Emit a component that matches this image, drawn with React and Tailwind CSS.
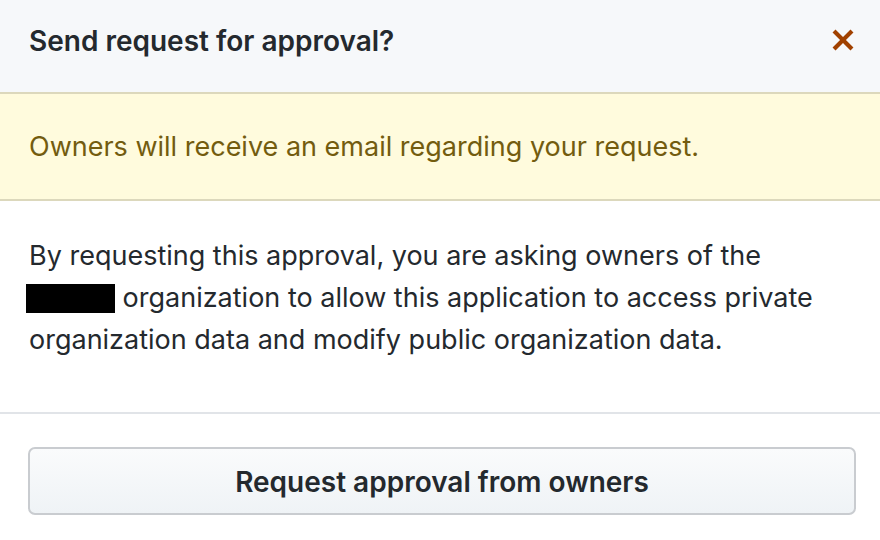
export default function App() {
  return (
    <div className="w-[880px] h-[540px] bg-white overflow-hidden text-[#24292e]" style={{ fontFamily: 'Inter, "Liberation Sans", sans-serif' }}>
      <div className="h-[94px] bg-[#f6f8fa] border-b-2 border-[#dcd8bc] pl-[29px] pr-[25px] pt-[20px] flex justify-between items-start">
        <h3 className="text-[28px] leading-[42px] font-semibold">Send request for approval?</h3>
        <button className="mt-[4px] block text-[#a04100]" aria-label="Close">
          <svg className="block" width="24" height="32" viewBox="0 0 12 16" fill="currentColor">
            <path d="M7.48 8l3.75 3.75-1.48 1.48L6 9.48l-3.75 3.75-1.48-1.48L4.52 8 .77 4.25l1.48-1.48L6 6.52l3.75-3.75 1.48 1.48L7.48 8z" />
          </svg>
        </button>
      </div>
      <div className="bg-[#fffbdd] border-b-2 border-[#dcd8bc] pl-[29px] pt-[32px] pb-[31px] text-[#735c0f] text-[27px] leading-[42px]">
        Owners will receive an email regarding your request.
      </div>
      <div className="pl-[29px] pr-[20px] pt-[34px] pb-[51px] border-b-2 border-[#e1e4e8] text-[27px] leading-[42px]">
        <p>
          By requesting this approval, you are asking owners of the
          <br />
          <span className="inline-block w-[89px] h-[29px] bg-black -ml-[3px] align-[-6px]"></span>{' '}
          organization to allow this application to access private
          <br />
          organization data and modify public organization data.
        </p>
      </div>
      <div className="px-[28px] pt-[33px]">
        <button className="w-[828px] h-[68px] flex items-center justify-center rounded-[7px] border-2 border-[#c9ccd0] bg-gradient-to-b from-[#fafbfc] to-[#eff3f6] text-[28px] leading-[42px] font-semibold text-[#24292e]">
          <span className="mt-[2px]">Request approval from owners</span>
        </button>
      </div>
    </div>
  );
}
